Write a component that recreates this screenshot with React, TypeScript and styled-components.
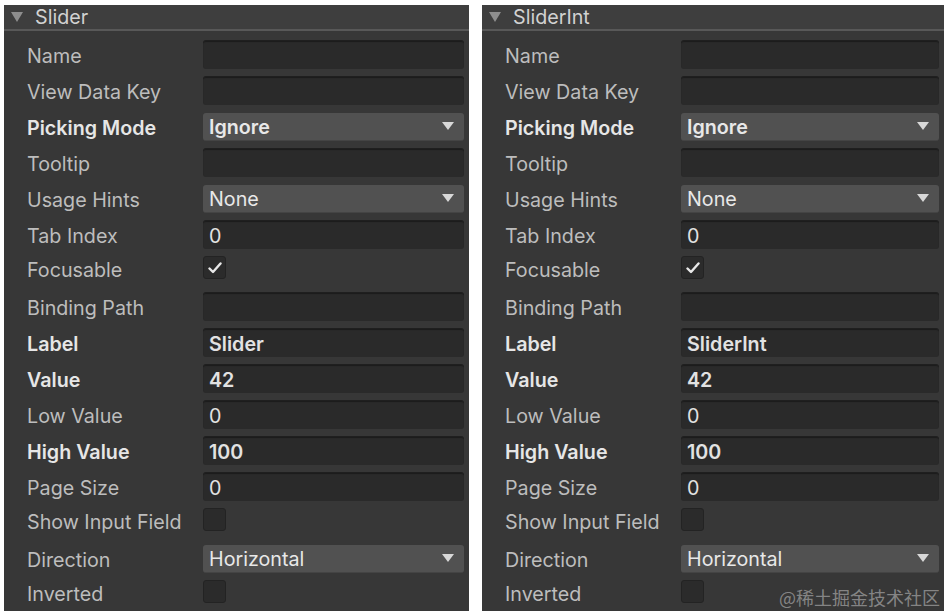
import styled, { createGlobalStyle } from "styled-components";

const Global = createGlobalStyle`
  body {
    margin: 0;
    background: #ffffff;
    font-family: Inter, "Noto Sans", "Noto Sans CJK SC", sans-serif;
  }
`;

const Page = styled.div`
  position: relative;
  display: flex;
  gap: 13px;
  padding: 5px 0 0 4px;
  width: 948px;
  height: 616px;
  box-sizing: border-box;
  overflow: hidden;
`;

const Panel = styled.div<{ $width: number }>`
  width: ${(p) => p.$width}px;
  height: 606px;
  background: #373737;
  display: flex;
  flex-direction: column;
`;

const Header = styled.div`
  height: 27px;
  background: #3e3e3e;
  border-bottom: 2px solid #585858;
  display: flex;
  align-items: center;
  padding-left: 7px;
  gap: 12px;
  color: #d2d2d2;
  font-size: 19.7px;
`;

const Arrow = styled.span`
  width: 0;
  height: 0;
  border-left: 6px solid transparent;
  border-right: 6px solid transparent;
  border-top: 10px solid #8e8e8e;
`;

const Body = styled.div`
  padding: 6px 5px 0 23px;
  display: flex;
  flex-direction: column;
`;

const Row = styled.div<{ $check?: boolean }>`
  display: grid;
  grid-template-columns: 176px 1fr;
  align-items: center;
  height: ${(p) => (p.$check ? 32 : 36)}px;
  margin-bottom: ${(p) => (p.$check ? 4 : 0)}px;
`;

const Label = styled.div<{ $bold?: boolean }>`
  font-size: 19.7px;
  color: ${(p) => (p.$bold ? "#e6e6e6" : "#bdbdbd")};
  font-weight: ${(p) => (p.$bold ? 600 : 400)};
  white-space: nowrap;
  margin-top: 1px;
`;

const Field = styled.div<{ $bold?: boolean }>`
  height: 29px;
  box-sizing: border-box;
  background: #2a2a2a;
  border-radius: 3px;
  border-top: 1px solid #1f1f1f;
  box-shadow: inset 0 1px 1px rgba(0, 0, 0, 0.35);
  padding: 2px 0 0 6px;
  display: flex;
  align-items: center;
  font-size: 19.7px;
  color: #e2e2e2;
  font-weight: ${(p) => (p.$bold ? 600 : 400)};
  margin-top: -1px;
`;

const Select = styled.div<{ $bold?: boolean }>`
  height: 28px;
  box-sizing: border-box;
  background: #515151;
  border-radius: 3px;
  border-bottom: 1px solid #444;
  padding: 2px 10px 0 6px;
  display: flex;
  align-items: center;
  justify-content: space-between;
  font-size: 19.7px;
  color: #e8e8e8;
  font-weight: ${(p) => (p.$bold ? 600 : 400)};
  margin-top: -1px;
`;

const SelectArrow = styled.span`
  width: 0;
  height: 0;
  border-left: 6px solid transparent;
  border-right: 6px solid transparent;
  border-top: 8px solid #d8d8d8;
  margin-top: -2px;
`;

const Check = styled.div`
  width: 23px;
  height: 23px;
  box-sizing: border-box;
  background: #2b2b2b;
  border: 1px solid #232323;
  border-radius: 3px;
  display: flex;
  align-items: center;
  justify-content: center;
  margin-top: -3px;
`;

const Watermark = styled.div`
  position: absolute;
  right: 8px;
  bottom: 6px;
  font-size: 18px;
  color: rgba(200, 200, 200, 0.55);
  font-family: "Noto Sans CJK SC", "Noto Sans", sans-serif;
`;

type Item =
  | { kind: "field"; label: string; value?: string; bold?: boolean; valueBold?: boolean }
  | { kind: "select"; label: string; value: string; bold?: boolean; valueBold?: boolean }
  | { kind: "check"; label: string; checked?: boolean };

function items(name: string): Item[] {
  return [
    { kind: "field", label: "Name" },
    { kind: "field", label: "View Data Key" },
    { kind: "select", label: "Picking Mode", value: "Ignore", bold: true, valueBold: true },
    { kind: "field", label: "Tooltip" },
    { kind: "select", label: "Usage Hints", value: "None" },
    { kind: "field", label: "Tab Index", value: "0" },
    { kind: "check", label: "Focusable", checked: true },
    { kind: "field", label: "Binding Path" },
    { kind: "field", label: "Label", value: name, bold: true, valueBold: true },
    { kind: "field", label: "Value", value: "42", bold: true, valueBold: true },
    { kind: "field", label: "Low Value", value: "0" },
    { kind: "field", label: "High Value", value: "100", bold: true, valueBold: true },
    { kind: "field", label: "Page Size", value: "0" },
    { kind: "check", label: "Show Input Field" },
    { kind: "select", label: "Direction", value: "Horizontal" },
    { kind: "check", label: "Inverted" },
  ];
}

function Tick() {
  return (
    <svg width="14" height="12" viewBox="0 0 14 12">
      <path d="M1.5 6.5 L5 10 L12.5 1.5" fill="none" stroke="#e8e8e8" strokeWidth="2.4" strokeLinecap="round" strokeLinejoin="round" />
    </svg>
  );
}

function Inspector({ title, width }: { title: string; width: number }) {
  return (
    <Panel $width={width}>
      <Header>
        <Arrow />
        {title}
      </Header>
      <Body>
        {items(title).map((it) => (
          <Row key={it.label} $check={it.kind === "check"}>
            <Label $bold={"bold" in it && it.bold}>{it.label}</Label>
            {it.kind === "field" && <Field $bold={it.valueBold}>{it.value}</Field>}
            {it.kind === "select" && (
              <Select $bold={it.valueBold}>
                {it.value}
                <SelectArrow />
              </Select>
            )}
            {it.kind === "check" && <Check>{it.checked ? <Tick /> : null}</Check>}
          </Row>
        ))}
      </Body>
    </Panel>
  );
}

export default function App() {
  return (
    <>
      <Global />
      <Page>
        <Inspector title="Slider" width={465} />
        <Inspector title="SliderInt" width={462} />
        <Watermark>@稀土掘金技术社区</Watermark>
      </Page>
    </>
  );
}
